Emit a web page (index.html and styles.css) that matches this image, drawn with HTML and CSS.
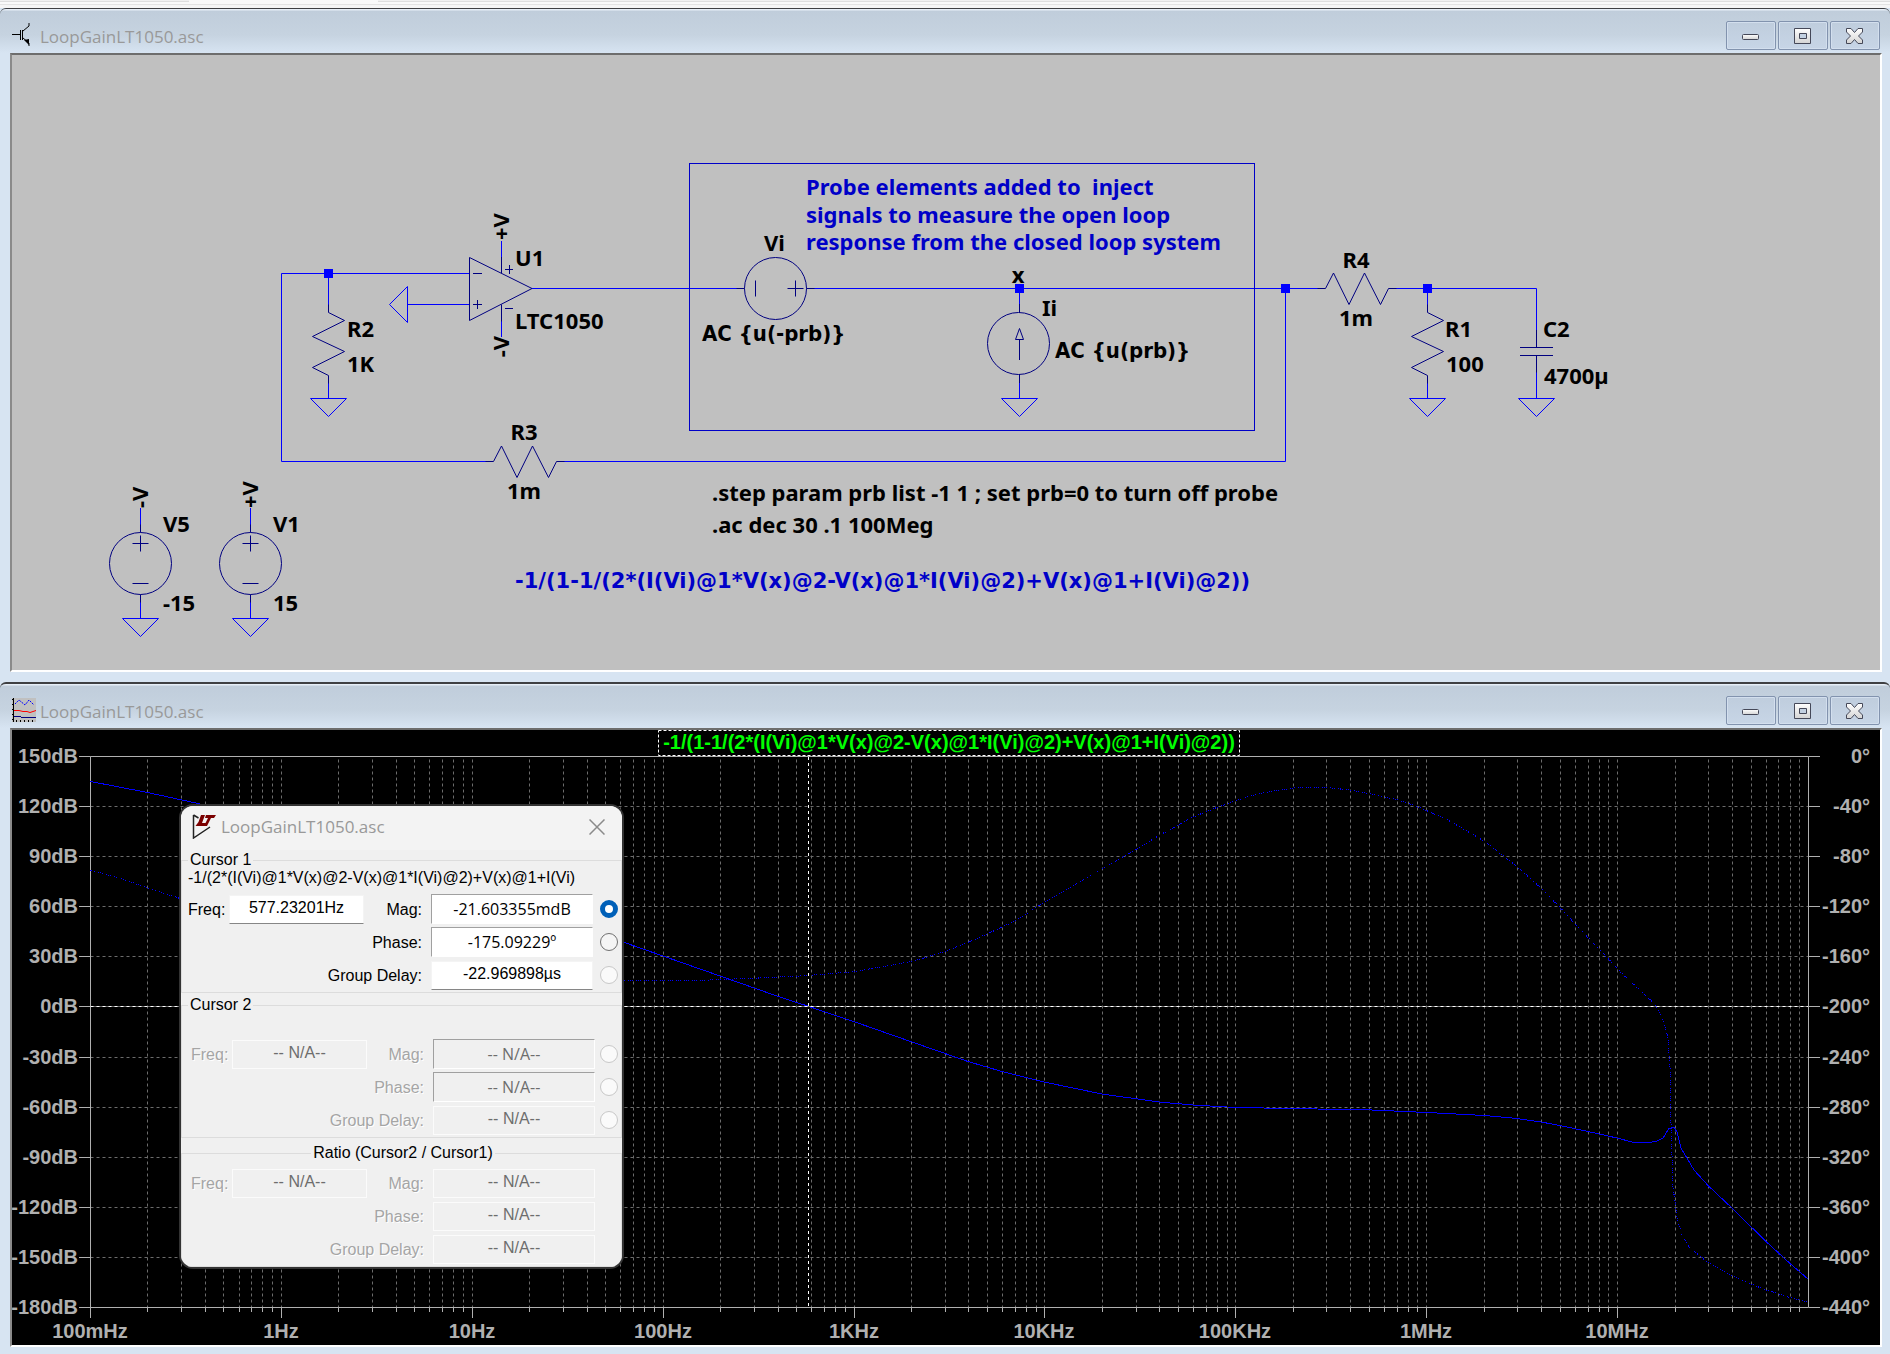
FILE: index.html
```html
<!DOCTYPE html>
<html lang="en">
<head>
  <meta charset="UTF-8">
  <title>LoopGainLT1050.asc</title>
  <link rel="stylesheet" href="styles.css">
</head>
<body>

  <div class="tab-strip"><span class="tab"></span><span class="tab active"></span><span class="tab rest"></span></div>

  <!-- shared symbols -->
  <svg class="defs" width="0" height="0" aria-hidden="true">
    <defs>
      <linearGradient id="glyph" x1="0" y1="0" x2="0" y2="1">
        <stop offset="0" stop-color="#fff"/><stop offset="1" stop-color="#d4d4d4"/>
      </linearGradient>
      <symbol id="min" viewBox="0 0 48 27">
        <rect x="15.500" y="12.500" width="16" height="5" rx="1" fill="url(#glyph)" stroke="#454858"/>
      </symbol>
      <symbol id="max" viewBox="0 0 48 27">
        <path d="M15.500 6.500h16v15h-16zM20.500 11.500v5h7v-5z" fill="url(#glyph)" fill-rule="evenodd" stroke="#454858"/>
      </symbol>
      <symbol id="close" viewBox="0 0 48 27">
        <path d="M15.500 6.500h4.500l3.500 4 3.500-4h4.500v3.500l-4 4 4 4v3.500h-4.500l-3.500-4-3.500 4h-4.500v-3.500l4-4-4-4z" fill="url(#glyph)" stroke="#454858" stroke-linejoin="round"/>
      </symbol>
      <g id="gnd"><path class="wire" d="M-18 0h36l-18 18z"/></g>
      <g id="resv"><path class="part" d="M0 -8V0L16 8L-16 24L16 39L-16 55L0 63V71"/></g>
      <g id="resh"><path class="part" d="M-8 0H0L8 -15.500L23.500 16L39 -15.500L55 16L63 0H71"/></g>
      <g id="vsrc"><path class="part" d="M0 -39V-31M0 31V39M-8 -20h16M0 -28v16M-8 20h16"/><circle class="part" r="31"/></g>
      <rect id="node" class="node" x="-4.500" y="-4.500" width="9" height="9"/>
    </defs>
  </svg>

  <section class="window">
    <header class="titlebar">
      <svg class="app-icon" width="24" height="24" viewBox="0 0 24 24">
        <path d="M0 11.500h9M8.500 7v10M10.500 7v10M11 8l6-5V0M11 15l6 5v3" fill="none" stroke="#000"/>
        <path d="M12 17l5-1v6z"/>
      </svg>
      <h1>LoopGainLT1050.asc</h1>
      <div class="buttons">
        <button type="button" aria-label="Minimize"><svg><use href="#min"/></svg></button>
        <button type="button" aria-label="Maximize"><svg><use href="#max"/></svg></button>
        <button type="button" aria-label="Close"><svg><use href="#close"/></svg></button>
      </div>
    </header>

    <div class="client">
      <svg class="schematic" viewBox="12 55 1868 615">
        <!-- wires -->
        <path class="wire" d="M469 273.500H281.500V461.500H486M563 461.500H1285.500V288.500M328.500 273v32M328.500 383v15M407.500 304.500H469M501.500 241v16M501.500 321v16M532 288.500H738M814 288.500H1318M1395 288.500H1536.500V331M1019.500 288v17M1019.500 382v16M1427.500 288v17M1427.500 383v15M1536.500 372v26M140.500 508v17M140.500 602v16M250.500 508v17M250.500 602v16"/>
        <path class="wire" d="M407.500 286.500v36L389.500 304.500z"/>
        <rect class="probe-box" x="689.500" y="163.500" width="565" height="267"/>

        <!-- op amp -->
        <path class="part" d="M469.500 257.500v63L532 288.500zM501.500 257v16M501.500 304.500v17M473 273.500h9M473 304.500h9M477.500 300v9M505 269.500h8M509.500 265v9M505 308.500h8"/>

        <use href="#resv" x="328.500" y="312.500"/>
        <use href="#resv" x="1427.500" y="312.500"/>
        <use href="#resh" x="493.500" y="461.500"/>
        <use href="#resh" x="1325.500" y="288.500"/>
        <use href="#vsrc" x="140.500" y="563.500"/>
        <use href="#vsrc" x="250.500" y="563.500"/>
        <use href="#vsrc" transform="translate(775.500 288.500) rotate(90)"/>

        <!-- current source -->
        <circle class="part" cx="1018.500" cy="343.500" r="31"/>
        <path class="part" d="M1019.500 304v9M1019.500 374v9M1019.500 360v-20.500M1019.500 328.500l-4 11h8z"/>
        <!-- C2 -->
        <path class="part" d="M1536.500 330v17.500M1520 347.500h33M1520 355.500h33M1536.500 355.500v17"/>

        <use href="#gnd" x="328.500" y="398.500"/>
        <use href="#gnd" x="1019.500" y="398.500"/>
        <use href="#gnd" x="1427.500" y="398.500"/>
        <use href="#gnd" x="1536.500" y="398.500"/>
        <use href="#gnd" x="140.500" y="618.500"/>
        <use href="#gnd" x="250.500" y="618.500"/>

        <use href="#node" x="328.500" y="273.500"/>
        <use href="#node" x="1019.500" y="288.500"/>
        <use href="#node" x="1285.500" y="288.500"/>
        <use href="#node" x="1427.500" y="288.500"/>

        <g class="net">
          <text transform="translate(509 240) rotate(-90)">+V</text>
          <text transform="translate(509 336) rotate(-90)" text-anchor="end">-V</text>
          <text transform="translate(148 508) rotate(-90)">-V</text>
          <text transform="translate(258 508) rotate(-90)">+V</text>
          <text x="1018" y="283" text-anchor="middle">x</text>
        </g>

        <text x="515" y="266">U1</text><text x="515" y="329">LTC1050</text>
        <text x="347" y="337">R2</text><text x="347" y="372">1K</text>
        <text x="524" y="440" text-anchor="middle">R3</text><text x="524" y="499" text-anchor="middle">1m</text>
        <text x="163" y="532">V5</text><text x="163" y="611">-15</text>
        <text x="273" y="532">V1</text><text x="273" y="611">15</text>
        <text x="764" y="251">Vi</text><text x="702" y="341" class="value">AC {u(-prb)}</text>
        <text x="1042" y="316">Ii</text><text x="1055" y="358" class="value">AC {u(prb)}</text>
        <text x="1356" y="268" text-anchor="middle">R4</text><text x="1356" y="326" text-anchor="middle">1m</text>
        <text x="1445" y="337">R1</text><text x="1446" y="372">100</text>
        <text x="1543" y="337">C2</text><text x="1544" y="384">4700µ</text>
        <text x="712" y="501">.step param prb list -1 1 ; set prb=0 to turn off probe</text>
        <text x="712" y="533">.ac dec 30 .1 100Meg</text>

        <g class="comment">
          <text x="806" y="195">Probe elements added to&#160; inject</text>
          <text x="806" y="223">signals to measure the open loop</text>
          <text x="806" y="250">response from the closed loop system</text>
          <text x="515" y="588" class="formula">-1/(1-1/(2*(I(Vi)@1*V(x)@2-V(x)@1*I(Vi)@2)+V(x)@1+I(Vi)@2))</text>
        </g>
      </svg>
    </div>
  </section>

  <section class="window">
    <header class="titlebar">
      <svg class="app-icon" width="24" height="24" viewBox="0 0 24 24">
        <rect width="24" height="24" fill="#c0c0c0"/>
        <path d="M1.500 0v24M0 1.500h1M0 6.500h1M0 11.500h1M0 16.500h1M0 21.500h1M4.500 22v2M8.500 22v2M12.500 22v2M16.500 22v2M20.500 22v2" stroke="#000"/>
        <path d="M3 6l4-4 6 5 4-5 5 5" fill="none" stroke="#00f" stroke-dasharray="2 1"/>
        <path d="M2 12.500h5l4 1h4l3 1 6-2" fill="none" stroke="#f00"/>
        <path d="M2 18.500h7M9 19.500h15" stroke="#000080"/>
      </svg>
      <h1>LoopGainLT1050.asc</h1>
      <div class="buttons">
        <button type="button" aria-label="Minimize"><svg><use href="#min"/></svg></button>
        <button type="button" aria-label="Maximize"><svg><use href="#max"/></svg></button>
        <button type="button" aria-label="Close"><svg><use href="#close"/></svg></button>
      </div>
    </header>

    <div class="client">
      <svg class="plot" viewBox="12 730 1868 615">
        <g id="grid"></g>
        <path class="trace" d="M90.500 781.500L147.500 792.500L205 805L400 867L560 921L623 942L663 956L720 976L774 995L809 1006.500L855 1022L912 1042L968 1061.500L1002 1071.500L1044 1082L1102 1094L1159 1102L1193 1105L1236 1107.500L1290 1108.500L1372 1110L1427 1112.500L1484 1115.500L1517 1118.500L1541 1122L1560 1125.500L1588 1131.500L1617 1138L1634 1142.500H1650L1657 1141L1663 1138L1669 1128.500L1674 1127.500L1677 1132L1681 1148L1694 1170L1708 1185.500L1733 1209L1766 1241.500L1790 1263.500L1808 1279"/>
        <path class="trace phase" d="M90.500 870.500L105 874L125 880L148 888L180 898.500L300 937L420 965L520 978L623 980.500H697L771 977.500L808 975.500L855 971.500L912 961.500L945 951.500L968 942.500L987 934L1016 920.500L1044 902.500L1073 885.500L1102 868.500L1136 849.500L1159 835.500L1193 817L1218 807L1236 800.500L1250 796L1270 791.500L1290 788.500L1298 787.500H1326L1350 790L1369 793.500L1398 800L1417 806.500L1447 819.500L1484 841L1517 866.500L1541 888L1560 907.500L1588 937.500L1608 958.500L1623 974.500L1650 999.500L1656 1006.500L1663 1020L1668 1038L1670 1067L1671 1123L1673 1187L1677 1217L1682 1236L1690 1248L1708 1262.500L1733 1276L1751 1284L1766 1290L1790 1297.500L1808 1302"/>
        <path class="cursor-base" d="M90.500 1006.500H1808"/>
        <path class="cursor" d="M90.500 1006.500H1808M808.500 757V1307"/>
        <rect class="label-box" x="658.500" y="730.500" width="581" height="25"/>
        <text class="trace-label" x="949" y="749" text-anchor="middle">-1/(1-1/(2*(I(Vi)@1*V(x)@2-V(x)@1*I(Vi)@2)+V(x)@1+I(Vi)@2))</text>
      </svg>

      <form class="dialog">
        <header class="dialog-title">
          <svg width="24" height="25" viewBox="0 0 24 25">
            <path d="M1.500 1v23L18 13M1.500 1l5 3" fill="none" stroke="#222" stroke-width="1.500"/>
            <path d="M9 1h4l-3 8h5l-1 3H3.500l3-4z M14 1h10l-2 3h-3l-4 8h-3l4-8h-3z" fill="#7b0000"/>
          </svg>
          <h2>LoopGainLT1050.asc</h2>
          <button type="button" aria-label="Close"><svg width="16" height="16" viewBox="0 0 16 16"><path d="M0.500 0.500l15 15M15.500 0.500l-15 15" stroke="#8a8a8a" stroke-width="1.500"/></svg></button>
        </header>

        <fieldset class="cursor1">
          <legend>Cursor 1</legend>
          <p class="expr">-1/(2*(I(Vi)@1*V(x)@2-V(x)@1*I(Vi)@2)+V(x)@1+I(Vi)</p>
          <div class="fields">
            <label for="f1">Freq:</label><input type="text" id="f1" class="flat" value="577.23201Hz">
            <label for="m1" class="right">Mag:</label><input type="text" id="m1" class="sunken" value="-21.603355mdB">
            <input type="radio" name="sel" aria-label="Mag" checked>
            <label for="p1" class="wide">Phase:</label><input type="text" id="p1" class="sunken" value="-175.09229º">
            <input type="radio" name="sel" aria-label="Phase">
            <label for="g1" class="wide">Group Delay:</label><input type="text" id="g1" class="flat" value="-22.969898µs">
            <input type="radio" name="sel" aria-label="Group Delay" disabled>
          </div>
        </fieldset>

        <fieldset class="cursor2">
          <legend>Cursor 2</legend>
          <div class="fields off">
            <label for="f2">Freq:</label><input type="text" id="f2" class="flat" value="-- N/A--" disabled>
            <label for="m2" class="right">Mag:</label><input type="text" id="m2" class="sunken" value="-- N/A--" disabled>
            <input type="radio" name="sel2" aria-label="Mag" disabled>
            <label for="p2" class="wide">Phase:</label><input type="text" id="p2" class="sunken" value="-- N/A--" disabled>
            <input type="radio" name="sel2" aria-label="Phase" disabled>
            <label for="g2" class="wide">Group Delay:</label><input type="text" id="g2" class="flat" value="-- N/A--" disabled>
            <input type="radio" name="sel2" aria-label="Group Delay" disabled>
          </div>
        </fieldset>

        <fieldset class="ratio">
          <legend>Ratio (Cursor2 / Cursor1)</legend>
          <div class="fields off">
            <label for="f3">Freq:</label><input type="text" id="f3" class="flat" value="-- N/A--" disabled>
            <label for="m3" class="right">Mag:</label><input type="text" id="m3" class="flat" value="-- N/A--" disabled>
            <span></span>
            <label for="p3" class="wide">Phase:</label><input type="text" id="p3" class="flat" value="-- N/A--" disabled>
            <span></span>
            <label for="g3" class="wide">Group Delay:</label><input type="text" id="g3" class="flat" value="-- N/A--" disabled>
            <span></span>
          </div>
        </fieldset>
      </form>
    </div>
  </section>

  <script>
    const LEFT = 90.5, RIGHT = 1808.5, TOP = 756.5, BOTTOM = 1307;
    const DECADES = ['100mHz', '1Hz', '10Hz', '100Hz', '1KHz', '10KHz', '100KHz', '1MHz', '10MHz'];
    const decade = (RIGHT - LEFT) / 9;
    const snap = v => Math.floor(v) + 0.5;
    let dashes = '', solid = '', labels = '';

    // log frequency axis
    for (let d = 0; d < 9; d++) {
      for (let n = 1; n <= 9; n++) {
        const x = snap(LEFT + decade * (d + Math.log10(n)));
        if (d + n > 1) dashes += `M${x} ${TOP + 3}V${BOTTOM}`;
        solid += `M${x} ${BOTTOM}v${n === 1 ? 11 : 5}`;
      }
      labels += `<text x="${Math.floor(LEFT + decade * d)}" y="1338" text-anchor="middle">${DECADES[d]}</text>`;
    }

    // magnitude on the left, phase on the right
    for (let i = 0; i <= 11; i++) {
      const y = snap(TOP + i * 50.092);
      if (i > 0 && i < 11) dashes += `M${LEFT} ${y}H${RIGHT}`;
      solid += `M79 ${y}H${LEFT}M${RIGHT} ${y}H1820`;
      labels += `<text x="78" y="${y + 6.5}" text-anchor="end">${150 - i * 30}dB</text>`;
      labels += `<text x="1870" y="${y + 6.5}" text-anchor="end">${-40 * i}°</text>`;
    }
    solid += `M${LEFT} ${TOP}H${RIGHT}V${snap(BOTTOM)}H${LEFT}z`;

    document.getElementById('grid').innerHTML =
      `<path class="dash" d="${dashes}"/><path class="axis" d="${solid}"/><g class="tick">${labels}</g>`;
  </script>

</body>
</html>
```

FILE: styles.css
```css
body {
  margin: 0;
  height: 100vh;
  overflow: hidden;
  background: #d7e4f2;
  font-family: 'Liberation Sans', Arial, sans-serif;
}
h1, h2, p {
  margin: 0;
}
.defs {
  position: absolute;
}

/* top strip */
.tab-strip {
  display: flex;
  height: 8px;
  background: linear-gradient(#f9f9f9 4px, #e3e3e3 4px, #e3e3e3 5px, #f5f5f5 5px);
}
.tab {
  width: 10%;
  height: 2px;
  box-sizing: border-box;
  background: #f0f0f0;
  border-bottom: 1px solid #dedede;
}
.tab.active {
  background: #f9f9f9;
  border: 0;
}
.tab.rest {
  flex: 1;
}

/* mdi windows */
.window {
  border-top: 1px solid #3f4043;
  border-radius: 6px 6px 0 0;
  padding: 0 8px 10px 10px;
  background: linear-gradient(#e6eef7 1px, #c0cddb 2px, #c6d3e0 26px, #d7e4f2 44px);
}
.window + .window {
  border-top-width: 2px;
}
.titlebar {
  display: flex;
  align-items: flex-end;
  height: 41px;
  padding: 0 2px 3px;
}
.app-icon {
  margin-bottom: 3px;
}
.titlebar h1 {
  flex: 1;
  margin-left: 4px;
  font: 17px/26px 'Open Sans', sans-serif;
  color: #999;
}
.buttons {
  display: flex;
  gap: 2px;
}
.buttons button {
  width: 50px;
  height: 29px;
  padding: 0;
  border: 1px solid #8293ae;
  border-radius: 2px;
  box-shadow: inset 0 0 0 1px #d3dfee;
  background: linear-gradient(#bfcddd, #c7d5e6);
}
.buttons svg {
  display: block;
  width: 48px;
  height: 27px;
}
.client {
  position: relative;
  border: 2px solid;
  border-color: #6d6d6d #fff #fff #8a8a8a;
}
.schematic, .plot {
  display: block;
  width: 100%;
  height: auto;
}

/* schematic */
.schematic {
  background: #c0c0c0;
  font: bold 22px 'Noto Sans', Tahoma, sans-serif;
}
.value {
  font-family: 'DejaVu Sans Condensed', Tahoma, sans-serif;
}
.formula {
  font-family: 'DejaVu Sans', Verdana, sans-serif;
  font-size: 21px;
}
.wire, .part, .probe-box {
  fill: none;
  stroke: #00f;
}
.part {
  stroke: #000080;
}
.probe-box {
  stroke: #0000c8;
}
.node {
  fill: #00f;
}
.comment {
  fill: #0000c8;
}

/* plot */
.plot {
  background: #000;
  font: bold 20px 'Liberation Sans', Arial, sans-serif;
}
.dash {
  fill: none;
  stroke: #6c6c6c;
  stroke-dasharray: 3 3;
}
.axis {
  fill: none;
  stroke: #b0b0b0;
}
.tick {
  fill: #b0b0b0;
}
.trace {
  fill: none;
  stroke: #00f;
  stroke-width: 1;
  shape-rendering: crispEdges;
}
.phase {
  stroke-dasharray: 1 1 1 1 1 3;
}
.cursor-base {
  stroke: #6c6c6c;
}
.cursor {
  stroke: #fff;
  stroke-dasharray: 3 3;
}
.label-box {
  fill: #000;
  stroke: #fff;
  stroke-dasharray: 3 2;
}
.trace-label {
  fill: #0f0;
}

/* cursor dialog */
.dialog {
  position: absolute;
  left: 169px;
  top: 76px;
  width: 441px;
  border-radius: 12px;
  background: #f0f0f0;
  box-shadow: 0 0 0 2px #333;
  overflow: hidden;
  font-size: 16px;
  line-height: 18px;
}
.dialog-title {
  display: flex;
  align-items: center;
  height: 45px;
  box-sizing: border-box;
  padding: 0 17px 4px 11px;
  background: linear-gradient(#f3f3f3 44px, #f0f0f0 44px);
}
.dialog-title h2 {
  flex: 1;
  margin-left: 5px;
  font: 17px/24px 'Open Sans', sans-serif;
  color: #999;
}
.dialog-title button {
  display: flex;
  padding: 0;
  border: 0;
  background: none;
}
fieldset {
  margin: 0;
  border: 1px solid #dcdcdc;
  padding: 0 3px 2px 6px;
}
legend {
  padding: 0 2px;
}
.expr {
  height: 20px;
  margin-bottom: 5px;
  line-height: 18px;
  white-space: nowrap;
}
.fields {
  display: grid;
  grid-template-columns: 34px 135px 1fr 162px 18px;
  grid-auto-rows: 30px;
  gap: 3px 7px;
  align-items: center;
}
.right, .wide {
  text-align: right;
  padding-right: 2px;
}
.wide {
  grid-column: 1 / 4;
}
.fields label {
  padding-top: 2px;
}
.fields input[type=text] {
  box-sizing: border-box;
  width: 100%;
  height: 30px;
  padding: 0;
  text-align: center;
  font: 16px 'Liberation Sans', Arial, sans-serif;
  color: #000;
  background: #fff;
}
.fields .flat {
  border: 1px solid #f4f4f4;
  border-bottom-color: #868686;
}
.fields input[type=text].flat {
  height: 29px;
  padding-bottom: 3px;
}
.fields .sunken {
  border: 1px solid;
  border-color: #a0a0a0 #fff #fff #a0a0a0;
}
.fields input[type=text].sunken {
  font-family: 'Open Sans', sans-serif;
}
.fields input[type=radio] {
  appearance: none;
  justify-self: end;
  width: 18px;
  height: 18px;
  margin: 0;
  border: 1px solid #707070;
  border-radius: 50%;
  background: #f5f5f5;
}
.fields input[type=radio]:checked {
  border: 5px solid #0060b8;
  background: #fff;
}
.fields input[type=radio]:disabled {
  border-color: #c8c8c8;
  background: #fafafa;
}
.cursor2 {
  margin-top: 3px;
}
.cursor2 .fields {
  margin-top: 25px;
}
.ratio {
  margin-top: 6px;
}
.ratio legend {
  margin: auto;
}
.ratio .fields {
  margin-top: 6px;
}
.off {
  padding-left: 3px;
  grid-template-columns: 34px 135px 1fr 162px 16px;
}
.off label {
  color: #a5a5a5;
  text-shadow: 1px 1px #fff;
}
.fields.off input[type=text] {
  color: #6d6d6d;
  background: #f0f0f0;
}
.off .flat {
  border: 1px solid #fbfbfb;
}
```
